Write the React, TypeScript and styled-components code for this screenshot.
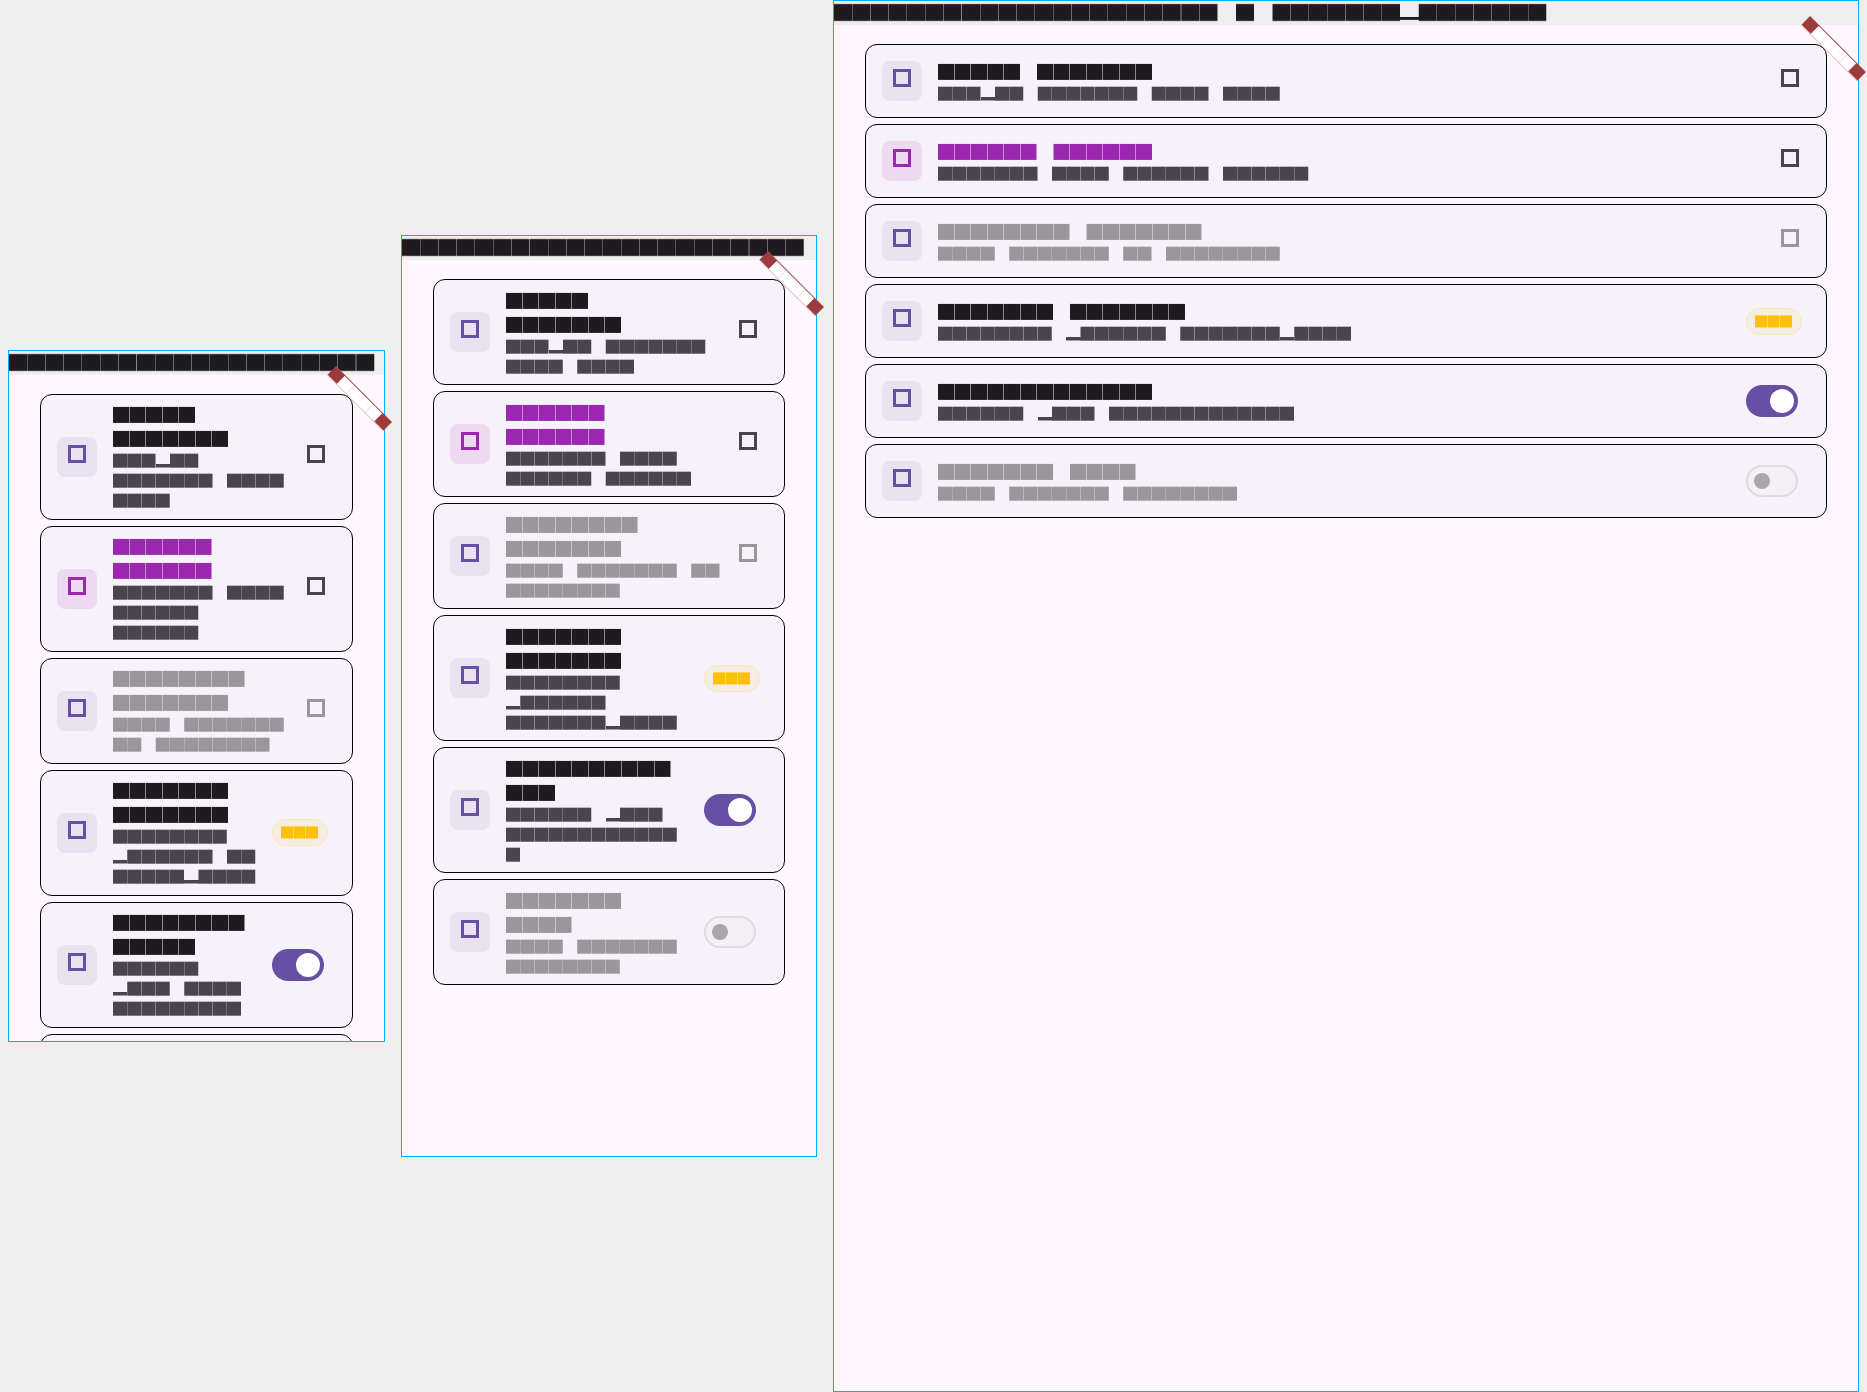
import React from "react";
import styled, { createGlobalStyle } from "styled-components";

const Global = createGlobalStyle`
  html, body { margin: 0; padding: 0; background: #eeeeee; }
`;

const Stage = styled.div`
  box-sizing: border-box;
  width: 1867px;
  height: 1392px;
  padding: 0 8px;
  display: flex;
  gap: 16px;
  align-items: center;
  background: #eeeeee;
  overflow: hidden;
  font-family: "Noto Sans CJK SC", "DejaVu Sans", sans-serif;
  text-rendering: geometricPrecision;
`;

const Frame = styled.section<{ $w: number; $h: number }>`
  position: relative;
  box-sizing: border-box;
  flex: none;
  width: ${(p) => p.$w}px;
  height: ${(p) => p.$h}px;
  border: 1px solid #00b0ff;
  background: #fef7ff;
  display: flex;
  flex-direction: column;
`;

const Header = styled.header`
  --ls: 0.27px;
  flex: none;
  height: 24px;
  background: #eeeeee;
  overflow: hidden;
  white-space: pre;
  color: #1d1b20;
  font-size: 18px;
  letter-spacing: var(--ls);
  line-height: 24px;
`;

const HeaderText = styled.span`
  display: block;
  transform: scaleY(0.94);
  transform-origin: top left;
  will-change: transform;
`;

const Scroll = styled.div<{ $top: number }>`
  flex: 1;
  min-height: 0;
  overflow: hidden;
  padding: ${(p) => p.$top}px 31px 0;
  display: flex;
  flex-direction: column;
  gap: 6px;
`;

const Ribbon = styled.div`
  position: absolute;
  top: 41.35px;
  right: -14.85px;
  box-sizing: border-box;
  width: 78.7px;
  height: 13px;
  transform: rotate(45deg);
  background:
    linear-gradient(90deg, #9c3a3d 0 12.7px, transparent 12.7px calc(100% - 12.7px), #9c3a3d calc(100% - 12.7px)),
    repeating-linear-gradient(90deg, #ffffff 0 13px, #f1e4e6 13px 13.5px);
  border-top: 1.5px solid #a0464a;
  border-bottom: 1px solid #e6c4c8;
`;

const Card = styled.article`
  flex: none;
  box-sizing: border-box;
  min-height: 74px;
  padding: 8px 24px 8px 16px;
  display: flex;
  align-items: center;
  gap: 16px;
  border: 1px solid #000000;
  border-radius: 12px;
  background: #f6f2fa;
`;

const Leading = styled.div<{ $accent: boolean }>`
  flex: none;
  width: 40px;
  height: 40px;
  border-radius: 8px;
  display: flex;
  align-items: center;
  justify-content: center;
  background: ${(p) => (p.$accent ? "#eedaf0" : "#e8e2f1")};
`;

const Tofu = styled.span<{ $color: string }>`
  box-sizing: border-box;
  display: block;
  width: 18px;
  height: 18px;
  margin-bottom: 6px;
  border: 3px solid ${(p) => p.$color};
`;

const Body = styled.div<{ $lift: number }>`
  flex: 1;
  min-width: 0;
  display: flex;
  flex-direction: column;
  margin: ${(p) => -p.$lift}px 0 ${(p) => p.$lift}px;
  will-change: transform;
`;

const Title = styled.div<{ $color: string }>`
  --ls: 0.5px;
  color: ${(p) => p.$color};
  font-size: 16px;
  letter-spacing: var(--ls);
  line-height: 24px;
  white-space: pre;
`;

const SubGroup = styled.div`
  margin: 1px 0 -1px;
`;

const Sub = styled.div<{ $color: string }>`
  --ls: 0.25px;
  color: ${(p) => p.$color};
  font-size: 14px;
  letter-spacing: var(--ls);
  line-height: 20px;
  white-space: pre;
`;

const Low = styled.span`
  display: inline-block;
  width: calc(1em + var(--ls));
  letter-spacing: 0;
  -webkit-text-fill-color: transparent;
  background: linear-gradient(currentColor, currentColor) left bottom / 100% 3.5px no-repeat;
  line-height: 1;
  vertical-align: 0.03em;
`;

const Trailing = styled.div`
  flex: none;
  width: 24px;
  height: 24px;
  display: flex;
  align-items: center;
  justify-content: center;
`;

const Pill = styled.div`
  flex: none;
  box-sizing: border-box;
  height: 27px;
  padding: 1px 8px 0;
  display: flex;
  align-items: center;
  border: 1px solid #fde5ae;
  border-radius: 14px;
  background: #f6eee2;
  color: #ffc107;
  font-size: 12px;
  letter-spacing: 0.5px;
  line-height: 16px;
  white-space: pre;
  will-change: transform;
`;

const SwitchBox = styled.div`
  flex: none;
  margin-right: 4px;
  box-sizing: border-box;
  width: 52px;
  height: 32px;
  border-radius: 16px;
  display: flex;
  align-items: center;
`;

const SwitchOn = styled(SwitchBox)`
  background: #6750a4;
  justify-content: flex-end;
  padding-right: 4px;
`;

const SwitchOff = styled(SwitchBox)`
  border: 2px solid #dedbe2;
  background: #f3f0f6;
  padding-left: 6px;
`;

const Thumb = styled.span<{ $on: boolean }>`
  display: block;
  border-radius: 50%;
  width: ${(p) => (p.$on ? 24 : 16)}px;
  height: ${(p) => (p.$on ? 24 : 16)}px;
  background: ${(p) => (p.$on ? "#ffffff" : "#aaa6ae")};
`;

const b = (n: number) => "█".repeat(n);
const u = "_";
const s = "\u3000";

function Blocks({ text }: { text: string }) {
  const parts = text.split("_");
  return (
    <>
      {parts.map((part, i) => (
        <React.Fragment key={i}>
          {i > 0 && <Low>_</Low>}
          {part}
        </React.Fragment>
      ))}
    </>
  );
}

type Kind = "box" | "pill" | "on" | "off";
type Row = { title: string[]; sub: string[]; tone?: "accent" | "muted"; end: Kind };

const DARK = "#1d1b20";
const MID = "#49454f";
const MUTED = "#99979c";
const PURPLE = "#9c27b0";
const PRIMARY = "#6750a4";

function ListRow({ row, lift = 0 }: { row: Row; lift?: number }) {
  const muted = row.tone === "muted" || row.end === "off";
  const accent = row.tone === "accent";
  return (
    <Card>
      <Leading $accent={accent}>
        <Tofu $color={accent ? PURPLE : PRIMARY} />
      </Leading>
      <Body $lift={lift}>
        {row.title.map((t, i) => (
          <Title key={i} $color={muted ? MUTED : accent ? PURPLE : DARK}>
            <Blocks text={t} />
          </Title>
        ))}
        <SubGroup>
          {row.sub.map((t, i) => (
            <Sub key={i} $color={muted ? MUTED : MID}>
              <Blocks text={t} />
            </Sub>
          ))}
        </SubGroup>
      </Body>
      {row.end === "box" && (
        <Trailing>
          <Tofu $color={muted ? MUTED : MID} />
        </Trailing>
      )}
      {row.end === "pill" && <Pill>{b(3)}</Pill>}
      {row.end === "on" && (
        <SwitchOn>
          <Thumb $on />
        </SwitchOn>
      )}
      {row.end === "off" && (
        <SwitchOff>
          <Thumb $on={false} />
        </SwitchOff>
      )}
    </Card>
  );
}

const w = (...n: (number | string)[]) =>
  n.map((x) => (typeof x === "number" ? b(x) : x)).join("");

const narrow: Row[] = [
  { end: "box", title: [b(5), b(7)], sub: [w(3, u, 2), w(7, s, 4), b(4)] },
  { end: "box", tone: "accent", title: [b(6), b(6)], sub: [w(7, s, 4), b(6), b(6)] },
  { end: "box", tone: "muted", title: [b(8), b(7)], sub: [w(4, s, 7), w(2, s, 8)] },
  { end: "pill", title: [b(7), b(7)], sub: [b(8), w(u, 6, s, 2), w(5, u, 4)] },
  { end: "on", title: [b(8), b(5)], sub: [b(6), w(u, 3, s, 4), b(9)] },
  { end: "off", title: [b(7), b(4)], sub: [w(4, s, 7), b(8)] },
];

const medium: Row[] = [
  { end: "box", title: [b(5), b(7)], sub: [w(3, u, 2, s, 7), w(4, s, 4)] },
  { end: "box", tone: "accent", title: [b(6), b(6)], sub: [w(7, s, 4), w(6, s, 6)] },
  { end: "box", tone: "muted", title: [b(8), b(7)], sub: [w(4, s, 7, s, 2), b(8)] },
  { end: "pill", title: [b(7), b(7)], sub: [b(8), w(u, 6), w(7, u, 4)] },
  { end: "on", title: [b(10), b(3)], sub: [w(6, s, u, 3), b(12), b(1)] },
  { end: "off", title: [b(7), b(4)], sub: [w(4, s, 7), b(8)] },
];

const wide: Row[] = [
  { end: "box", title: [w(5, s, 7)], sub: [w(3, u, 2, s, 7, s, 4, s, 4)] },
  { end: "box", tone: "accent", title: [w(6, s, 6)], sub: [w(7, s, 4, s, 6, s, 6)] },
  { end: "box", tone: "muted", title: [w(8, s, 7)], sub: [w(4, s, 7, s, 2, s, 8)] },
  { end: "pill", title: [w(7, s, 7)], sub: [w(8, s, u, 6, s, 7, u, 4)] },
  { end: "on", title: [b(13)], sub: [w(6, s, u, 3, s, 13)] },
  { end: "off", title: [w(7, s, 4)], sub: [w(4, s, 7, s, 8)] },
];

export default function App() {
  return (
    <>
      <Global />
      <Stage>
        <Frame $w={376.67} $h={692}>
          <Header>
            <HeaderText>{b(20)}</HeaderText>
          </Header>
          <Scroll $top={18.5}>
            {narrow.map((r, i) => (
              <ListRow key={i} row={r} lift={1} />
            ))}
          </Scroll>
          <Ribbon />
        </Frame>
        <Frame $w={416} $h={922}>
          <Header>
            <HeaderText>{b(22)}</HeaderText>
          </Header>
          <Scroll $top={19}>
            {medium.map((r, i) => (
              <ListRow key={i} row={r} />
            ))}
          </Scroll>
          <Ribbon />
        </Frame>
        <Frame $w={1026.33} $h={1392}>
          <Header>
            <HeaderText>
              <Blocks text={w(21, s, 1, s, 7, u, 7)} />
            </HeaderText>
          </Header>
          <Scroll $top={19}>
            {wide.map((r, i) => (
              <ListRow key={i} row={r} />
            ))}
          </Scroll>
          <Ribbon />
        </Frame>
      </Stage>
    </>
  );
}
